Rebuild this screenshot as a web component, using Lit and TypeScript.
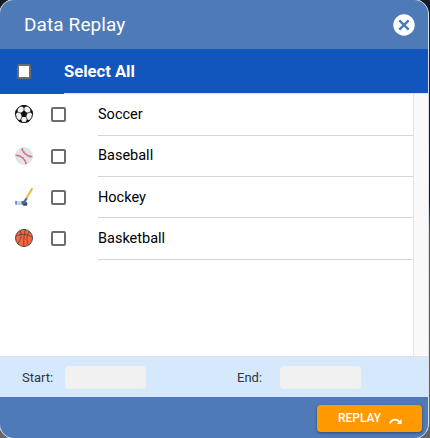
import { LitElement, html, css, svg } from "lit";
import { customElement } from "lit/decorators.js";

const icons = {
  soccer: svg`<circle cx="9" cy="9" r="8.5" fill="#f4f4f4" stroke="#111" stroke-width="1"/>
    <path d="M9 5.6l3.4 2.4-1.3 4H6.9L5.6 8zM5.5.9L9 2.7 12.5.9 9 0zM.2 9.6l2.7-2.4-.5-3.6L.5 6zM17.8 9.6l-2.7-2.4.5-3.6L17.5 6zM2.7 15.2l3.7-.7.7 3.3-2.6-.8zM15.3 15.2l-3.7-.7-.7 3.3 2.6-.8z" fill="#111"/>
    <path d="M9 6V2.2M12 8.2l3.6-1.3M10.9 11.7l1.6 3.2M7.1 11.7l-1.6 3.2M6 8.2L2.4 6.9" stroke="#222" stroke-width=".8"/>`,
  baseball: svg`<circle cx="9" cy="9" r="9" fill="#e1e4e8"/>
    <path d="M6.8 1.2C7.8 5.6 12 9.6 17.3 9.7M.6 8.2C6 8.2 10.2 12 11.2 17.1" fill="none" stroke="#de7485" stroke-width="1.4"/>
    <path d="M6.4 3.1l1.6-.5M8 5.6l1.4-1M10 7.9l1-1.3M12.5 9.5l.6-1.5M15.1 10.4l.2-1.5M2.9 9.3l.2-1.6M5.2 10.1l.7-1.5M7.4 11.7l1.1-1.2M9 13.8l1.4-.9M10.1 16l1.6-.5" stroke="#d94e64" stroke-width=".9"/>`,
  hockey: svg`<path d="M17.3.2L9.5 13.4" stroke="#f1b23c" stroke-width="1.9"/>
    <path d="M10.8 9.7l1.8 1-2.7 4.7-2.2 1H.3v-3.3h7.1c1 0 1.5-.4 1.9-1.1z" fill="#3974b8"/>
    <path d="M1.8 13.1h4.6v3.3H1.8z" fill="#d7e3ec"/><path d="M3.7 13.1h1v3.3h-1z" fill="#aebfcb"/>
    <ellipse cx="10" cy="15.9" rx="2.5" ry="1.9" fill="#31465c"/><ellipse cx="9.9" cy="14.9" rx="2.3" ry="1" fill="#526a80"/>`,
  basketball: svg`<circle cx="9" cy="9" r="8.5" fill="#ff6438" stroke="#4a4b4d" stroke-width="1"/>
    <path d="M10.2.5C9 6 8.4 12 9 17.5M.8 7.2C6 4.5 12 4.5 17.2 8.4M4.8 1.8C7 4 6.5 10.5 2.6 14.7M14.4 2.3C10.8 7.5 11.6 12.5 13.6 16.2" fill="none" stroke="#444548" stroke-width=".8"/>`,
};

const sports = [
  { name: "Soccer", icon: icons.soccer },
  { name: "Baseball", icon: icons.baseball },
  { name: "Hockey", icon: icons.hockey },
  { name: "Basketball", icon: icons.basketball },
];

@customElement("app-root")
export class AppRoot extends LitElement {
  static styles = css`
    :host {
      display: block;
      box-sizing: border-box;
      width: 430px;
      height: 438px;
      overflow: hidden;
      background: linear-gradient(#171b29 0, #111923 200px, #555 230px, #666 438px);
      font-family: Roboto, "Liberation Sans", sans-serif;
    }
    * { box-sizing: border-box; }
    .dialog {
      width: 430px;
      height: 440px;
      margin: -1px 0 0 -1px;
      display: flex;
      flex-direction: column;
      background: #fff;
      border: 1px solid #dcdfe3;
      border-radius: 15px;
      overflow: hidden;
    }
    .header {
      height: 49px;
      flex: none;
      display: flex;
      align-items: center;
      justify-content: space-between;
      padding: 0 13px 0 24px;
      background: #4e7ab7;
      color: #fff;
    }
    .title { font-size: 19px; line-height: 24px; letter-spacing: 0.1px; }
    .close { display: block; width: 22px; height: 22px; margin-top: 1px; }
    .select-all {
      height: 45px;
      flex: none;
      display: grid;
      grid-template-columns: 64px 1fr;
      background: #1155bd;
      color: #fff;
    }
    .check {
      width: 15px;
      height: 15px;
      border: 2px solid #6c6c6c;
      border-radius: 2px;
      background: #fff;
    }
    .select-all .check { width: 14px; margin: 15px 0 0 17px; }
    .all-label {
      font-size: 16.6px;
      font-weight: 700;
      line-height: 45px;
      height: 45px;
      border-bottom: 1px solid #dde3ee;
    }
    .list { flex: 1; min-height: 0; display: flex; }
    .rows { flex: 1; }
    .track { width: 15px; background: #f9f9f9; border-left: 1px solid #e3e3e3; }
    .row {
      height: 41.3px;
      display: grid;
      grid-template-columns: 36px 47px 1fr;
      padding-left: 15px;
    }
    .row:nth-child(3) { height: 41px; }
    .row:nth-child(4) { height: 41.6px; }
    .row:nth-child(3) .name { height: 41.3px; }
    .sport { width: 18px; height: 18px; margin-top: 11.4px; }
    .row .check { margin-top: 13.3px; }
    .name {
      height: 42px;
      border-bottom: 1px solid #d6d6d6;
      font-size: 14.5px;
      line-height: 42px;
      color: #000;
    }
    .range {
      height: 41px;
      flex: none;
      display: grid;
      grid-template-columns: 43px 172px 43px 1fr;
      align-items: center;
      padding-left: 22px;
      border-top: 1px solid #dfe3e7;
      background: #d6e8fc;
      font-size: 13px;
      color: #2e3740;
    }
    .field { width: 81px; height: 23px; border-radius: 4px; background: #f1f1f1; }
    .footer {
      height: 41px;
      flex: none;
      display: flex;
      justify-content: flex-end;
      padding: 8px 6px 0 0;
      background: #4e7ab7;
    }
    .replay {
      width: 105px;
      height: 27px;
      display: flex;
      align-items: center;
      padding: 0 0 1px 21px;
      border: 0;
      border-radius: 4px;
      background: #ff9900;
      box-shadow: 0 1px 3px rgba(0, 0, 0, 0.4);
      font: 500 12px/16px Roboto, sans-serif;
      color: #fff;
    }
    .arrow { width: 13px; height: 7px; margin: 7px 0 0 8px; }
  `;

  render() {
    return html`
      <div class="dialog">
        <div class="header">
          <span class="title">Data Replay</span>
          <svg class="close" viewBox="0 0 22 22">
            <circle cx="11" cy="11" r="10.7" fill="#fff" />
            <path d="M6.3 6.3l9.4 9.4M15.7 6.3l-9.4 9.4" stroke="#4e7ab7" stroke-width="2.4" />
          </svg>
        </div>
        <div class="select-all">
          <span class="check"></span>
          <span class="all-label">Select All</span>
        </div>
        <div class="list">
          <div class="rows">
            ${sports.map(
              (s) => html`<div class="row">
                <svg class="sport" viewBox="0 0 18 18">${s.icon}</svg>
                <span class="check"></span>
                <span class="name">${s.name}</span>
              </div>`
            )}
          </div>
          <div class="track"></div>
        </div>
        <div class="range">
          <span>Start:</span><span class="field"></span>
          <span>End:</span><span class="field"></span>
        </div>
        <div class="footer">
          <button class="replay">
            <span>REPLAY</span>
            <svg class="arrow" viewBox="0 0 13 7">
              <path d="M.8 5.5C2.8 1 7.5.4 10.4 3.7" fill="none" stroke="#fff" stroke-width="1.7" />
              <path d="M12.6 1v5H7.8z" fill="#fff" />
            </svg>
          </button>
        </div>
      </div>
    `;
  }
}
